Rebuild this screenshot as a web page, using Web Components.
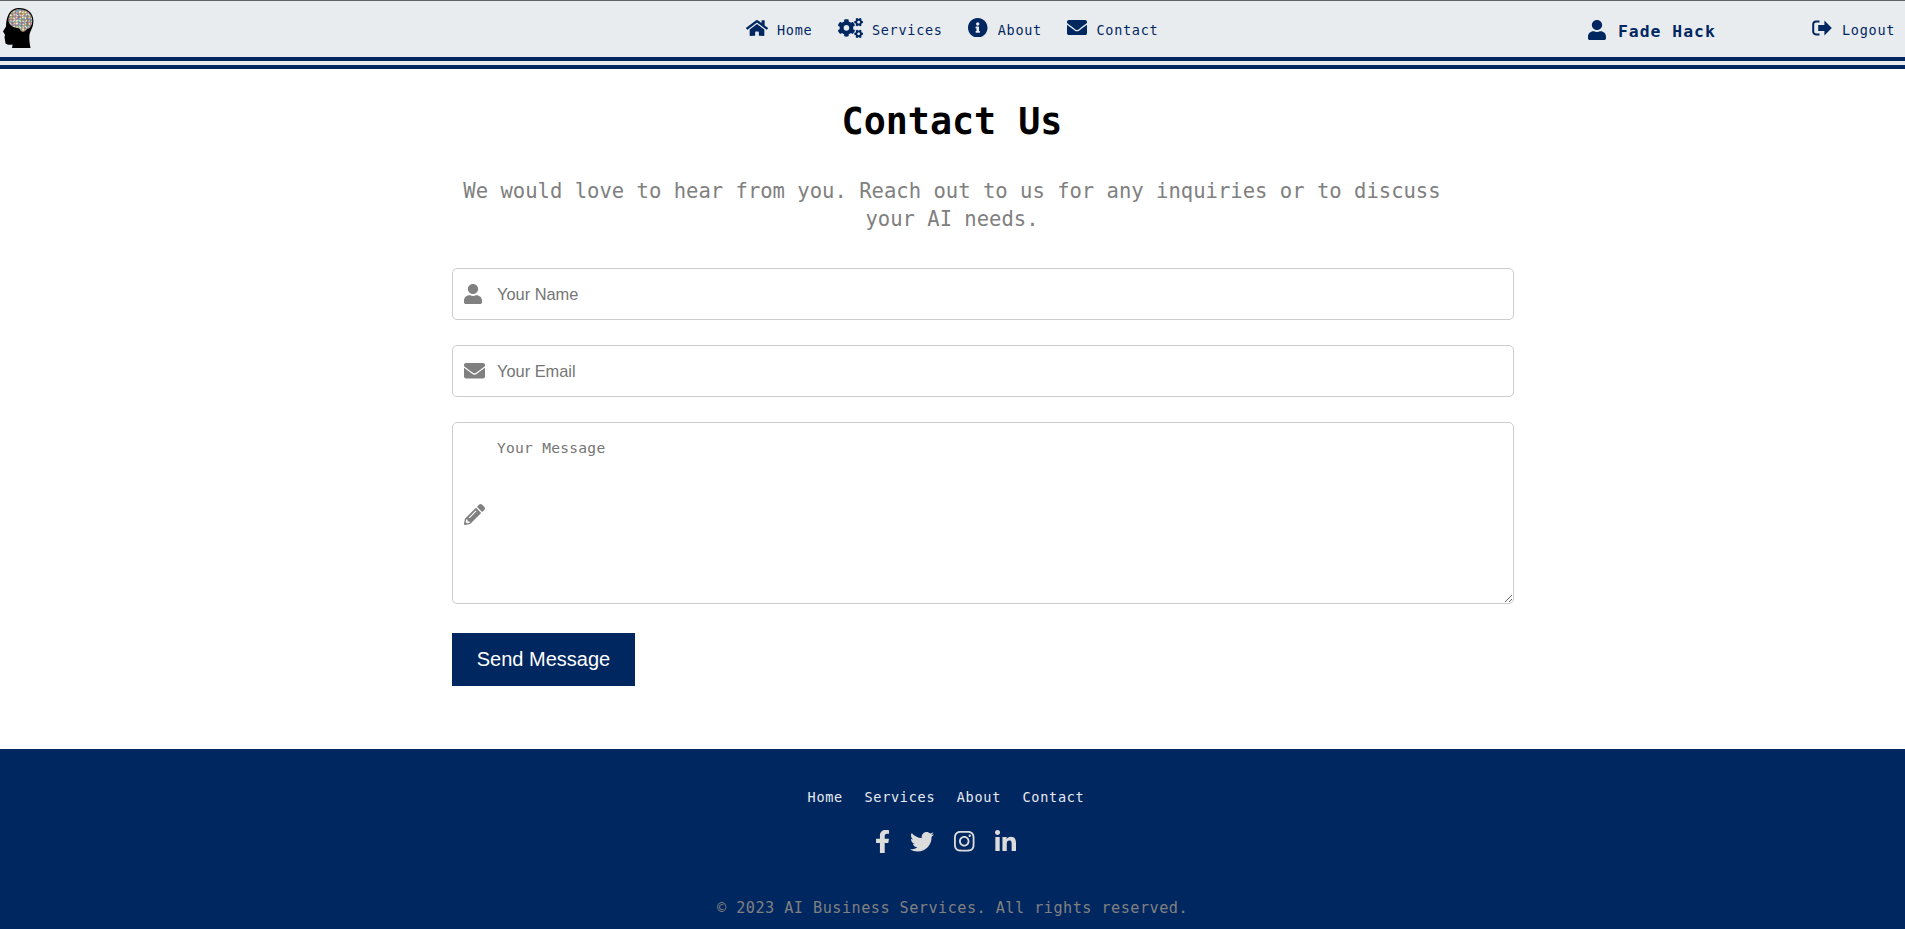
<!DOCTYPE html>
<html lang="en">
<head>
<meta charset="utf-8">
<title>Contact Us</title>
<style>
  html, body { margin: 0; padding: 0; background: #fff; }
  body { font-family: "DejaVu Sans Mono", "Liberation Mono", monospace; display: flex; flex-direction: column; height: 929px; overflow: hidden; }
</style>
</head>
<body>
<site-navbar></site-navbar>
<contact-page></contact-page>
<site-footer></site-footer>
<script>
const ICONS = {
  home: ['0 0 576 512', 'M280.37 148.26L96 300.11V464a16 16 0 0 0 16 16l112.06-.29a16 16 0 0 0 15.92-16V368a16 16 0 0 1 16-16h64a16 16 0 0 1 16 16v95.64a16 16 0 0 0 16 16.05L464 480a16 16 0 0 0 16-16V300L295.67 148.26a12.19 12.19 0 0 0-15.3 0zM571.6 251.47L488 182.56V44.05a12 12 0 0 0-12-12h-56a12 12 0 0 0-12 12v72.61L318.47 43a48 48 0 0 0-61 0L4.34 251.47a12 12 0 0 0-1.6 16.9l25.5 31A12 12 0 0 0 45.15 301l235.22-193.74a12.19 12.19 0 0 1 15.3 0L530.9 301a12 12 0 0 0 16.9-1.6l25.5-31a12 12 0 0 0-1.7-16.93z'],
  cogs: ['0 0 640 512', 'M512.1 191l-8.2 14.3c-3 5.3-9.4 7.5-15.1 5.4-11.8-4.4-22.6-10.7-32.1-18.6-4.6-3.8-5.8-10.5-2.8-15.7l8.2-14.3c-6.9-8-12.3-17.3-15.9-27.4h-16.5c-6 0-11.2-4.3-12.2-10.3-2-12-2.1-24.6 0-37.1 1-6 6.2-10.4 12.2-10.4h16.5c3.6-10.1 9-19.4 15.9-27.4l-8.2-14.3c-3-5.2-1.9-11.9 2.8-15.7 9.5-7.9 20.4-14.2 32.1-18.6 5.7-2.1 12.1.1 15.1 5.4l8.2 14.3c10.5-1.9 21.2-1.9 31.7 0L552 6.3c3-5.3 9.4-7.5 15.1-5.4 11.8 4.4 22.6 10.7 32.1 18.6 4.6 3.8 5.8 10.5 2.8 15.7l-8.2 14.3c6.9 8 12.3 17.3 15.9 27.4h16.5c6 0 11.2 4.3 12.2 10.3 2 12 2.1 24.6 0 37.1-1 6-6.2 10.4-12.2 10.4h-16.5c-3.6 10.1-9 19.4-15.9 27.4l8.2 14.3c3 5.2 1.9 11.9-2.8 15.7-9.5 7.9-20.4 14.2-32.1 18.6-5.7 2.1-12.1-.1-15.1-5.4l-8.2-14.3c-10.4 1.9-21.2 1.9-31.7 0zm-10.5-58.8c38.5 29.6 82.4-14.3 52.8-52.8-38.5-29.7-82.4 14.3-52.8 52.8zM386.3 286.1l33.7 16.8c10.1 5.8 14.5 18.1 10.5 29.1-8.9 24.2-26.4 46.4-42.6 65.8-7.4 8.9-20.2 11.1-30.3 5.3l-29.1-16.8c-16 13.7-34.6 24.6-54.9 31.7v33.6c0 11.6-8.3 21.6-19.7 23.6-24.6 4.2-50.4 4.4-75.9 0-11.5-2-20-11.9-20-23.6V418c-20.3-7.2-38.9-18-54.9-31.7L74 403c-10 5.8-22.9 3.6-30.3-5.3-16.2-19.4-33.3-41.6-42.2-65.7-4-10.9.4-23.2 10.5-29.1l33.3-16.8c-3.9-20.9-3.9-42.4 0-63.4L12 205.8c-10.1-5.8-14.6-18.1-10.5-29 8.9-24.2 26-46.4 42.2-65.8 7.4-8.9 20.2-11.1 30.3-5.3l29.1 16.8c16-13.7 34.6-24.6 54.9-31.7V57.1c0-11.5 8.2-21.5 19.6-23.5 24.6-4.2 50.5-4.4 76-.1 11.5 2 20 11.9 20 23.6v33.6c20.3 7.2 38.9 18 54.9 31.7l29.1-16.8c10-5.8 22.9-3.6 30.3 5.3 16.2 19.4 33.2 41.6 42.1 65.8 4 10.9.1 23.2-10 29.1l-33.7 16.8c3.9 21 3.9 42.5 0 63.5zm-117.6 21.1c59.2-77-28.7-164.9-105.7-105.7-59.2 77 28.7 164.9 105.7 105.7zm243.4 182.7l-8.2 14.3c-3 5.3-9.4 7.5-15.1 5.4-11.8-4.4-22.6-10.7-32.1-18.6-4.6-3.8-5.8-10.5-2.8-15.7l8.2-14.3c-6.9-8-12.3-17.3-15.9-27.4h-16.5c-6 0-11.2-4.3-12.2-10.3-2-12-2.1-24.6 0-37.1 1-6 6.2-10.4 12.2-10.4h16.5c3.6-10.1 9-19.4 15.9-27.4l-8.2-14.3c-3-5.2-1.9-11.9 2.8-15.7 9.5-7.9 20.4-14.2 32.1-18.6 5.7-2.1 12.1.1 15.1 5.4l8.2 14.3c10.5-1.9 21.2-1.9 31.7 0l8.2-14.3c3-5.3 9.4-7.5 15.1-5.4 11.8 4.4 22.6 10.7 32.1 18.6 4.6 3.8 5.8 10.5 2.8 15.7l-8.2 14.3c6.9 8 12.3 17.3 15.9 27.4h16.5c6 0 11.2 4.3 12.2 10.3 2 12 2.1 24.6 0 37.1-1 6-6.2 10.4-12.2 10.4h-16.5c-3.6 10.1-9 19.4-15.9 27.4l8.2 14.3c3 5.2 1.9 11.9-2.8 15.7-9.5 7.9-20.4 14.2-32.1 18.6-5.7 2.1-12.1-.1-15.1-5.4l-8.2-14.3c-10.4 1.9-21.2 1.9-31.7 0zM501.6 431c38.5 29.6 82.4-14.3 52.8-52.8-38.5-29.6-82.4 14.3-52.8 52.8z'],
  info: ['8 8 496 496', 'M256 8C119.043 8 8 119.083 8 256c0 136.997 111.043 248 248 248s248-111.003 248-248C504 119.083 392.957 8 256 8zm0 110c23.196 0 42 18.804 42 42s-18.804 42-42 42-42-18.804-42-42 18.804-42 42-42zm56 254c0 6.627-5.373 12-12 12h-88c-6.627 0-12-5.373-12-12v-24c0-6.627 5.373-12 12-12h12v-64h-12c-6.627 0-12-5.373-12-12v-24c0-6.627 5.373-12 12-12h64c6.627 0 12 5.373 12 12v100h12c6.627 0 12 5.373 12 12v24z'],
  envelope: ['0 64 512 384', 'M502.3 190.8c3.9-3.1 9.7-.2 9.7 4.7V400c0 26.5-21.5 48-48 48H48c-26.5 0-48-21.5-48-48V195.6c0-5 5.7-7.8 9.7-4.7 22.4 17.4 52.1 39.5 154.1 113.6 21.1 15.4 56.7 47.8 92.2 47.6 35.7.3 72-32.8 92.3-47.6 102-74.1 131.6-96.3 154-113.7zM256 320c23.2.4 56.6-29.2 73.4-41.4 132.7-96.3 142.8-104.7 173.4-128.7 5.8-4.5 9.2-11.5 9.2-18.9v-19c0-26.5-21.5-48-48-48H48C21.5 64 0 85.5 0 112v19c0 7.4 3.4 14.3 9.2 18.9 30.6 23.9 40.7 32.4 173.4 128.7 16.8 12.2 50.2 41.8 73.4 41.4z'],
  user: ['0 0 448 512', 'M224 256c70.7 0 128-57.3 128-128S294.7 0 224 0 96 57.3 96 128s57.3 128 128 128zm89.6 32h-16.7c-22.2 10.2-46.9 16-72.9 16s-50.6-5.8-72.9-16h-16.7C60.2 288 0 348.2 0 422.4V464c0 26.5 21.5 48 48 48h352c26.5 0 48-21.5 48-48v-41.6c0-74.2-60.2-134.4-134.4-134.4z'],
  signout: ['0 0 20 16', 'M7.5 2.6H4.2C3 2.6 2.2 3.4 2.2 4.6v6.8c0 1.2.8 2 2 2h3.3v2H4C1.8 15.4.2 13.8.2 11.6V4.4C.2 2.2 1.8.6 4 .6h3.5zM12.4.6 19.8 8l-7.4 7.4v-4.3H6.2V4.9h6.2z'],
  pencil: ['0 0 512 512', 'M497.9 142.1l-46.1 46.1c-4.7 4.7-12.3 4.7-17 0l-111-111c-4.7-4.7-4.7-12.3 0-17l46.1-46.1c18.7-18.7 49.1-18.7 67.9 0l60.1 60.1c18.8 18.7 18.8 49.1 0 67.9zM284.2 99.8L21.6 362.4.4 483.9c-2.9 16.4 11.4 30.6 27.8 27.8l121.5-21.3 262.6-262.6c4.7-4.7 4.7-12.3 0-17l-111-111c-4.8-4.7-12.4-4.7-17.1 0zM124.1 339.9c-5.5-5.5-5.5-14.3 0-19.8l154-154c5.5-5.5 14.3-5.5 19.8 0s5.5 14.3 0 19.8l-154 154c-5.5 5.5-14.3 5.5-19.8 0zM88 424h48v36.3l-64.5 11.3-31.1-31.1L51.7 376H88v48z'],
  facebook: ['22 0 272 512', 'M279.14 288l14.22-92.66h-88.91v-60.13c0-25.35 12.42-50.06 52.24-50.06h40.42V6.26S260.43 0 225.36 0c-73.22 0-121.08 44.38-121.08 124.72v70.62H22.89V288h81.39v224h100.17V288z'],
  twitter: ['0 48 512 416', 'M459.37 151.716c.325 4.548.325 9.097.325 13.645 0 138.72-105.583 298.558-298.558 298.558-59.452 0-114.68-17.219-161.137-47.106 8.447.974 16.568 1.299 25.34 1.299 49.055 0 94.213-16.568 130.274-44.832-46.132-.975-84.792-31.188-98.112-72.772 6.498.974 12.995 1.624 19.818 1.624 9.421 0 18.843-1.3 27.614-3.573-48.081-9.747-84.143-51.98-84.143-102.985v-1.299c13.969 7.797 30.214 12.67 47.431 13.319-28.264-18.843-46.781-51.005-46.781-87.391 0-19.492 5.197-37.36 14.294-52.954 51.655 63.675 129.3 105.258 216.365 109.807-1.624-7.797-2.599-15.918-2.599-24.04 0-57.828 46.782-104.934 104.934-104.934 30.213 0 57.502 12.67 76.67 33.137 23.715-4.548 46.456-13.32 66.599-25.34-7.798 24.366-24.366 44.833-46.132 57.827 21.117-2.273 41.584-8.122 60.426-16.243-14.292 20.791-32.161 39.308-52.628 54.253z'],
  instagram: ['0 32 448 448', 'M224.1 141c-63.6 0-114.9 51.3-114.9 114.9s51.3 114.9 114.9 114.9S339 319.5 339 255.9 287.7 141 224.1 141zm0 189.6c-41.1 0-74.7-33.5-74.7-74.7s33.5-74.7 74.7-74.7 74.7 33.5 74.7 74.7-33.6 74.7-74.7 74.7zm146.4-194.3c0 14.9-12 26.8-26.8 26.8-14.9 0-26.8-12-26.8-26.8s12-26.8 26.8-26.8 26.8 12 26.8 26.8zm76.1 27.2c-1.7-35.9-9.9-67.7-36.2-93.9-26.2-26.2-58-34.4-93.9-36.2-37-2.1-147.9-2.1-184.9 0-35.8 1.7-67.6 9.9-93.9 36.1s-34.4 58-36.2 93.9c-2.1 37-2.1 147.9 0 184.9 1.7 35.9 9.9 67.7 36.2 93.9s58 34.4 93.9 36.2c37 2.1 147.9 2.1 184.9 0 35.9-1.7 67.7-9.9 93.9-36.2 26.2-26.2 34.4-58 36.2-93.9 2.1-37 2.1-147.8 0-184.8zM398.8 388c-7.8 19.6-22.9 34.7-42.6 42.6-29.5 11.7-99.5 9-132.1 9s-102.7 2.6-132.1-9c-19.6-7.8-34.7-22.9-42.6-42.6-11.7-29.5-9-99.5-9-132.1s-2.6-102.7 9-132.1c7.8-19.6 22.9-34.7 42.6-42.6 29.5-11.7 99.5-9 132.1-9s102.7-2.6 132.1 9c19.6 7.8 34.7 22.9 42.6 42.6 11.7 29.5 9 99.5 9 132.1s2.7 102.7-9 132.1z'],
  linkedin: ['0 0 448 448', 'M100.28 448H7.4V148.9h92.88zM53.79 108.1C24.09 108.1 0 83.5 0 53.8a53.79 53.79 0 0 1 107.58 0c0 29.7-24.1 54.3-53.79 54.3zM447.9 448h-92.68V302.4c0-34.7-.7-79.2-48.29-79.2-48.29 0-55.69 37.7-55.69 76.7V448h-92.78V148.9h89.08v40.8h1.3c12.4-23.5 42.69-48.3 87.88-48.3 94 0 111.28 61.9 111.28 142.3V448z']
};

class UiIcon extends HTMLElement {
  connectedCallback() {
    if (this.shadowRoot) return;
    const [vb, d] = ICONS[this.getAttribute('name')];
    const w = this.getAttribute('w'), h = this.getAttribute('h');
    this.attachShadow({ mode: 'open' }).innerHTML = `
      <style>:host{display:inline-block;width:${w}px;height:${h}px;line-height:0;flex:none}svg{width:100%;height:100%;display:block;fill:currentColor}</style>
      <svg viewBox="${vb}" preserveAspectRatio="none" aria-hidden="true"><path d="${d}"/></svg>`;
  }
}
customElements.define('ui-icon', UiIcon);

class BrainLogo extends HTMLElement {
  connectedCallback() {
    if (this.shadowRoot) return;
    const colors = ['#d8a0b0','#70bcb8','#dccb80','#9a9aa8','#c4dccc','#d48aa0','#84b4d4','#e6d8b4','#a4c88c','#dc9470','#ac9ccc','#ece4d4','#8c8c90','#cdb070'];
    let seed = 11, cells = '';
    const rnd = () => (seed = (seed * 16807) % 2147483647) / 2147483647;
    for (let y = 8; y < 31; y += 1.5) for (let x = 8; x < 33; x += 1.5) {
      cells += `<rect x="${x}" y="${y}" width="1.6" height="1.6" fill="${colors[Math.floor(rnd() * colors.length)]}"/>`;
    }
    this.attachShadow({ mode: 'open' }).innerHTML = `
      <style>:host{display:block;width:34px;height:42px}svg{display:block;width:34px;height:42px}</style>
      <svg viewBox="0 6 34 42" aria-hidden="true">
        <defs>
          <clipPath id="b"><path d="M18 8.300C25.500 7.800 32.300 11.500 32.300 19.500 32.300 24.800 30 27.300 27 28 25.500 29 24.800 31 22.800 31 21 31 20.500 28 18 27 13.500 26.500 9.800 25 8.500 20.500 7.800 14 12 8.800 18 8.300Z"/></clipPath>
          <filter id="s" x="-5%" y="-5%" width="110%" height="110%"><feGaussianBlur stdDeviation=".2"/></filter>
        </defs>
        <path fill="#000" d="M18 7C26 6.600 33.400 11 33.400 20 33.400 26 30.800 29 29.500 33.500 29 37 29.500 42 30.500 47L12 47 12.600 43.500C10 44 7 43.800 5.500 42.500L5 39 4.500 36.500 5 33.800 3 30.500 6 25.500C6 15 10 7.500 18 7Z" filter="url(#s)"/>
        <g clip-path="url(#b)"><g filter="url(#s)">${cells}</g></g>
      </svg>`;
  }
}
customElements.define('brain-logo', BrainLogo);

const navItemTpl = document.createElement('template');
navItemTpl.innerHTML = `
  <style>
    :host{display:flex;align-items:center;color:#012761;font-size:13.5px;letter-spacing:.72px}
    a{display:flex;align-items:center;color:inherit;text-decoration:none}
    .ic{display:flex;align-items:center;height:19px;margin-right:var(--g,9px)}
    .t{position:relative;top:2.5px;white-space:nowrap;line-height:16px}
  </style>
  <a href="#"><span class="ic"><slot name="icon"></slot></span><span class="t"><slot></slot></span></a>`;
class NavItem extends HTMLElement {
  connectedCallback() {
    if (!this.shadowRoot) this.attachShadow({ mode: 'open' }).appendChild(navItemTpl.content.cloneNode(true));
  }
}
customElements.define('nav-item', NavItem);

const navTpl = document.createElement('template');
navTpl.innerHTML = `
  <style>
    :host{display:grid;grid-template-columns:746px 842px 224px 1fr;box-sizing:border-box;height:69px;flex:none;
      background:#e9ecef;border-top:1px solid #5f6368;border-bottom:12px double #012761;color:#012761}
    .logo{display:flex;align-items:flex-start;padding-top:6px}
    .links{display:flex;gap:25.5px;align-items:flex-start;padding-top:17px}
    .me{display:flex;align-items:flex-start;padding-top:19px;gap:12px;font-weight:bold;font-size:16.4px;letter-spacing:1px;line-height:20px;white-space:nowrap}
    .me span{position:relative;top:2px}
    .out{display:flex;align-items:flex-start;padding-top:17px}
  </style>
  <div class="logo"><brain-logo></brain-logo></div>
  <div class="links">
    <nav-item><ui-icon slot="icon" name="home" w="22" h="18"></ui-icon>Home</nav-item>
    <nav-item><ui-icon slot="icon" name="cogs" w="25" h="20"></ui-icon>Services</nav-item>
    <nav-item style="--g:10px"><ui-icon slot="icon" name="info" w="19.500" h="19.500"></ui-icon>About</nav-item>
    <nav-item><ui-icon slot="icon" name="envelope" w="20" h="15"></ui-icon>Contact</nav-item>
  </div>
  <div class="me"><ui-icon name="user" w="18" h="20"></ui-icon><span>Fade Hack</span></div>
  <div class="out"><nav-item style="--g:10px"><ui-icon slot="icon" name="signout" w="20" h="16"></ui-icon>Logout</nav-item></div>`;
class SiteNavbar extends HTMLElement {
  connectedCallback() {
    if (!this.shadowRoot) this.attachShadow({ mode: 'open' }).appendChild(navTpl.content.cloneNode(true));
  }
}
customElements.define('site-navbar', SiteNavbar);

class FormField extends HTMLElement {
  connectedCallback() {
    if (this.shadowRoot) return;
    const multi = this.hasAttribute('multiline');
    const ph = this.getAttribute('placeholder');
    const type = this.getAttribute('type') || 'text';
    const control = multi
      ? `<textarea placeholder="${ph}"></textarea>`
      : `<input type="${type}" placeholder="${ph}">`;
    this.attachShadow({ mode: 'open' }).innerHTML = `
      <style>
        :host{display:block;position:relative;width:1061.5px}
        .ic{position:absolute;left:12px;top:0;bottom:0;display:flex;align-items:center;color:#808080}
        input,textarea{display:block;box-sizing:border-box;width:100%;border:1px solid #ccc;border-radius:5px;outline:0;background:#fff;margin:0}
        input{height:52px;padding:0 12px 0 44px;font:16.4px "Liberation Sans",Arial,sans-serif}
        textarea{height:182px;padding:16px 12px 10px 44px;font:14.6px/17px "DejaVu Sans Mono","Liberation Mono",monospace;letter-spacing:.25px}
        ::placeholder{color:#757575;opacity:1}
      </style>
      <span class="ic"><slot name="icon"></slot></span>
      ${control}`;
  }
}
customElements.define('form-field', FormField);

const pageTpl = document.createElement('template');
pageTpl.innerHTML = `
  <style>
    :host{display:block;flex:none;height:680px;box-sizing:border-box;color:#000}
    .wrap{width:1000px;margin:0 0 0 452px;padding-top:29px}
    h1{margin:0;font-size:36.7px;line-height:48px;font-weight:bold;text-align:center}
    p{margin:31px 0 35px;padding:0 10px;font-size:20.55px;line-height:28px;text-align:center;color:#808080}
    form{display:flex;flex-direction:column;gap:25px;align-items:flex-start;margin:0}
    button{margin-top:4px;height:53px;width:183px;border:0;padding:0;background:#012761;color:#fff;font:20px "Liberation Sans",Arial,sans-serif}
    .up{margin-top:-1px}
    .down{margin-top:3px}
  </style>
  <div class="wrap">
    <h1>Contact Us</h1>
    <p>We would love to hear from you. Reach out to us for any inquiries or to discuss your AI needs.</p>
    <form onsubmit="return false">
      <form-field placeholder="Your Name"><ui-icon class="up" slot="icon" name="user" w="18" h="20"></ui-icon></form-field>
      <form-field type="email" placeholder="Your Email"><ui-icon slot="icon" name="envelope" w="21" h="15.500"></ui-icon></form-field>
      <form-field multiline placeholder="Your Message"><ui-icon class="down" slot="icon" name="pencil" w="21" h="21"></ui-icon></form-field>
      <button type="submit">Send Message</button>
    </form>
  </div>`;
class ContactPage extends HTMLElement {
  connectedCallback() {
    if (!this.shadowRoot) this.attachShadow({ mode: 'open' }).appendChild(pageTpl.content.cloneNode(true));
  }
}
customElements.define('contact-page', ContactPage);

const footTpl = document.createElement('template');
footTpl.innerHTML = `
  <style>
    :host{display:block;flex:none;height:180px;box-sizing:border-box;background:#012761;padding-top:39px;text-align:center}
    .links{display:flex;justify-content:center;gap:21.5px;font-size:13.5px;letter-spacing:.72px;line-height:18px;padding-right:13px}
    a{color:#e9ecef;text-decoration:none}
    .social{display:flex;justify-content:center;align-items:flex-start;height:24px;margin-top:24px;color:#dcdcdc;padding-right:13px}
    .copy{margin:44px 0 0;font-size:15.2px;letter-spacing:.47px;line-height:20px;color:#808080}
  </style>
  <div class="links"><a href="#">Home</a><a href="#">Services</a><a href="#">About</a><a href="#">Contact</a></div>
  <div class="social">
    <ui-icon name="facebook" w="13" h="23"></ui-icon>
    <ui-icon name="twitter" w="24" h="19.500" style="margin:2px 0 0 21px"></ui-icon>
    <ui-icon name="instagram" w="20.500" h="20.500" style="margin:1px 0 0 20px"></ui-icon>
    <ui-icon name="linkedin" w="21" h="21" style="margin:0 0 0 20.500px"></ui-icon>
  </div>
  <p class="copy">© 2023 AI Business Services. All rights reserved.</p>`;
class SiteFooter extends HTMLElement {
  connectedCallback() {
    if (!this.shadowRoot) this.attachShadow({ mode: 'open' }).appendChild(footTpl.content.cloneNode(true));
  }
}
customElements.define('site-footer', SiteFooter);
</script>
</body>
</html>
